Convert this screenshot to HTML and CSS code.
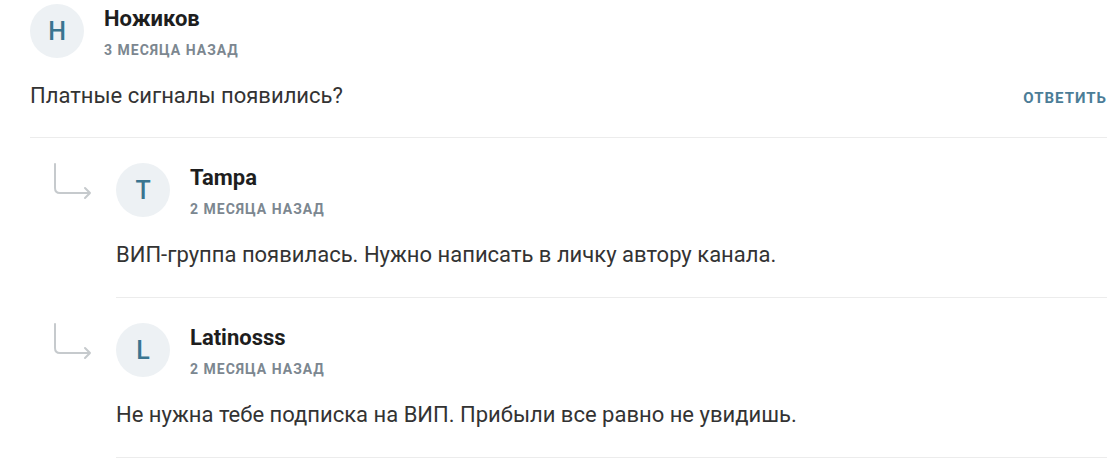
FILE: index.html
```html
<!DOCTYPE html>
<html lang="ru">
<head>
  <meta charset="UTF-8">
  <meta name="viewport" content="width=device-width, initial-scale=1.0">
  <title>Комментарии</title>
  <link rel="stylesheet" href="styles.css">
</head>
<body>

  <!-- Top comment -->
  <div class="comment">
    <div class="comment-head">
      <div class="avatar">Н</div>
      <div class="meta">
        <div class="author">Ножиков</div>
        <div class="date">3 месяца назад</div>
      </div>
    </div>
    <div class="comment-row">
      <div class="comment-text">Платные сигналы появились?</div>
      <a class="reply-link" href="#">Ответить</a>
    </div>
  </div>

  <!-- Replies -->
  <div class="reply">
    <div class="reply-icon">
      <svg width="40" height="40" viewBox="0 0 40 40">
        <path d="M2 1 V25 Q2 30 7 30 H37 M32 25 L37 30 L32 35" fill="none" stroke="#c6cacd" stroke-width="2" stroke-linecap="round" stroke-linejoin="round"/>
      </svg>
    </div>
    <div class="comment reply-body">
      <div class="comment-head">
        <div class="avatar">T</div>
        <div class="meta">
          <div class="author">Tampa</div>
          <div class="date">2 месяца назад</div>
        </div>
      </div>
      <div class="comment-row">
        <div class="comment-text">ВИП-группа появилась. Нужно написать в личку автору канала.</div>
      </div>
    </div>
  </div>

  <div class="reply">
    <div class="reply-icon">
      <svg width="40" height="40" viewBox="0 0 40 40">
        <path d="M2 1 V25 Q2 30 7 30 H37 M32 25 L37 30 L32 35" fill="none" stroke="#c6cacd" stroke-width="2" stroke-linecap="round" stroke-linejoin="round"/>
      </svg>
    </div>
    <div class="comment reply-body">
      <div class="comment-head">
        <div class="avatar">L</div>
        <div class="meta">
          <div class="author">Latinosss</div>
          <div class="date">2 месяца назад</div>
        </div>
      </div>
      <div class="comment-row">
        <div class="comment-text">Не нужна тебе подписка на ВИП. Прибыли все равно не увидишь.</div>
      </div>
    </div>
  </div>

</body>
</html>
```

FILE: styles.css
```css
* {
  margin: 0;
  padding: 0;
  box-sizing: border-box;
}
body {
  font-family: Roboto, 'Liberation Sans', sans-serif;
  background-color: #fff;
  color: #333;
  padding: 4px 10px 0 30px;
}
.comment {
  border-bottom: 1px solid #ececec;
  padding-bottom: 27px;
}
.comment-head {
  display: flex;
  align-items: flex-start;
  height: 54px;
}
.avatar {
  width: 54px;
  height: 54px;
  border-radius: 50%;
  background-color: #edf1f4;
  color: #3a7590;
  font-size: 25px;
  font-weight: 500;
  display: flex;
  align-items: center;
  justify-content: center;
  flex-shrink: 0;
}
.meta {
  margin-left: 20px;
  padding-top: 1px;
}
.author {
  font-size: 22px;
  font-weight: bold;
  color: #1e1e1e;
  line-height: 28px;
}
.date {
  margin-top: 9px;
  font-size: 14px;
  line-height: 16px;
  font-weight: bold;
  text-transform: uppercase;
  color: #7c8790;
  letter-spacing: 1px;
}
.comment-row {
  display: flex;
  justify-content: space-between;
  align-items: baseline;
  margin-top: 24px;
  height: 28px;
}
.comment-text {
  font-size: 22px;
  line-height: 28px;
  color: #333;
}
.reply-link {
  font-size: 15px;
  font-weight: bold;
  text-transform: uppercase;
  color: #4b7d97;
  text-decoration: none;
  letter-spacing: 1px;
}

/* Replies */
.reply {
  display: flex;
  margin-top: 25px;
}
.reply-icon {
  width: 86px;
  flex-shrink: 0;
  padding-left: 23px;
}
.reply-body {
  flex: 1;
  padding-bottom: 28px;
}
```
